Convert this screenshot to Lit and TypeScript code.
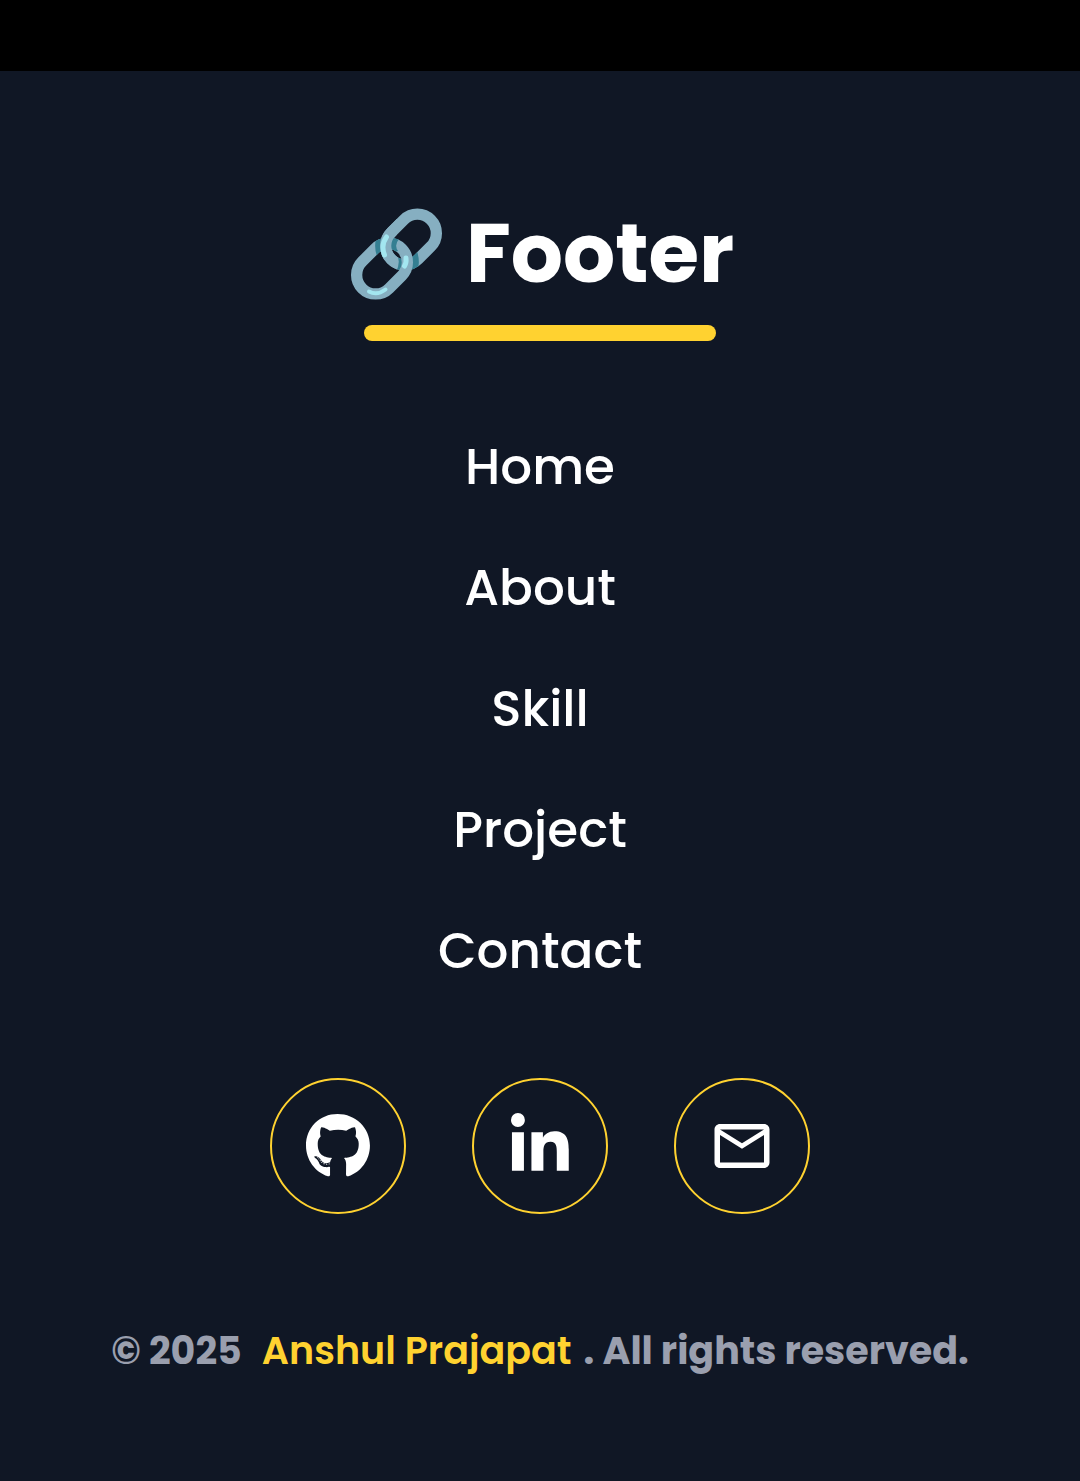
import { LitElement, html, css, svg } from "lit";
import { customElement } from "lit/decorators.js";

const chainIcon = svg`
  <svg class="chain" viewBox="0 0 100 100" role="img" aria-label="Link">
    <defs>
      <mask id="upper-ring" maskUnits="userSpaceOnUse" x="0" y="0" width="100" height="100">
        <rect x="37" y="16.5" width="56" height="38" rx="19" transform="rotate(-45 65 35.5)" fill="none" stroke="#fff" stroke-width="11.3" />
      </mask>
      <mask id="lower-ring" maskUnits="userSpaceOnUse" x="0" y="0" width="100" height="100">
        <rect x="8" y="45.6" width="56" height="38" rx="19" transform="rotate(-45 36 64.6)" fill="none" stroke="#fff" stroke-width="11.3" />
      </mask>
      <clipPath id="shade-right"><rect x="49" y="46" width="28" height="24" /></clipPath>
      <clipPath id="shade-left"><path d="M28 28H56V44L50 48H42V53H28z" /></clipPath>
      <clipPath id="front"><path d="M20 10H51V51Q55 58 50 68V70H20z" /></clipPath>
    </defs>
    <g fill="none" stroke="#86afc1" stroke-width="11.3">
      <rect x="37" y="16.5" width="56" height="38" rx="19" transform="rotate(-45 65 35.5)" />
      <g mask="url(#upper-ring)"><g clip-path="url(#shade-right)">
        <rect x="8" y="45.6" width="56" height="38" rx="19" transform="rotate(-45 36 64.6)" stroke="#347f92" stroke-width="23" />
      </g></g>
      <rect x="8" y="45.6" width="56" height="38" rx="19" transform="rotate(-45 36 64.6)" />
      <g mask="url(#lower-ring)"><g clip-path="url(#shade-left)">
        <rect x="37" y="16.5" width="56" height="38" rx="19" transform="rotate(-45 65 35.5)" stroke="#347f92" stroke-width="21" />
      </g></g>
      <g clip-path="url(#front)">
        <rect x="37" y="16.5" width="56" height="38" rx="19" transform="rotate(-45 65 35.5)" />
      </g>
    </g>
    <g fill="none" stroke="#a3e6f0" stroke-linecap="round">
      <path d="M40.5 33Q34.5 41 38.5 51" stroke-width="5" />
      <path d="M60 54Q60.5 59 58.5 62" stroke-width="5" />
      <path d="M23 87.5Q31 92 39.5 85.5" stroke-width="4" />
    </g>
  </svg>`;

const githubIcon = svg`
  <svg viewBox="0 0 496 512" aria-hidden="true"><path d="M165.9 397.4c0 2-2.3 3.6-5.2 3.6-3.3.3-5.6-1.3-5.6-3.6 0-2 2.3-3.6 5.2-3.6 3-.3 5.6 1.3 5.6 3.6zm-31.1-4.5c-.7 2 1.3 4.3 4.3 4.9 2.6 1 5.6 0 6.2-2s-1.3-4.3-4.3-5.2c-2.6-.7-5.5.3-6.2 2.3zm44.2-1.7c-2.9.7-4.9 2.6-4.6 4.9.3 2 2.9 3.3 5.9 2.6 2.9-.7 4.9-2.6 4.6-4.6-.3-1.9-3-3.2-5.9-2.9zM244.8 8C106.1 8 0 113.3 0 252c0 110.9 69.8 205.8 169.5 239.2 12.8 2.3 17.3-5.6 17.3-12.1 0-6.2-.3-40.4-.3-61.4 0 0-70 15-84.7-29.8 0 0-11.4-29.1-27.8-36.6 0 0-22.9-15.7 1.6-15.4 0 0 24.9 2 38.6 25.8 21.9 38.6 58.6 27.5 72.9 20.9 2.3-16 8.8-27.1 16-33.7-55.9-6.2-112.3-14.3-112.3-110.5 0-27.5 7.6-41.3 23.6-58.9-2.6-6.5-11.1-33.3 2.6-67.9 20.9-6.5 69 27 69 27 20-5.6 41.5-8.5 62.8-8.5s42.8 2.9 62.8 8.5c0 0 48.1-33.6 69-27 13.7 34.7 5.2 61.4 2.6 67.9 16 17.7 25.8 31.5 25.8 58.9 0 96.5-58.9 104.2-114.8 110.5 9.2 7.9 17 22.9 17 46.4 0 33.7-.3 75.4-.3 83.6 0 6.5 4.6 14.4 17.3 12.1C428.2 457.8 496 362.9 496 252 496 113.3 383.5 8 244.8 8zM97.2 352.9c-1.3 1-1 3.3.7 5.2 1.6 1.6 3.9 2.3 5.2 1 1.3-1 1-3.3-.7-5.2-1.6-1.6-3.9-2.3-5.2-1zm-10.8-8.1c-.7 1.3.3 2.9 2.3 3.9 1.6 1 3.6.7 4.3-.7.7-1.3-.3-2.9-2.3-3.9-2-.6-3.6-.3-4.3.7zm32.4 35.6c-1.6 1.3-1 4.3 1.3 6.2 2.3 2.3 5.2 2.6 6.5 1 1.3-1.3.7-4.3-1.3-6.2-2.2-2.3-5.2-2.6-6.5-1zm-11.4-14.7c-1.6 1-1.6 3.6 0 5.9 1.6 2.3 4.3 3.3 5.6 2.3 1.6-1.3 1.6-3.9 0-6.2-1.4-2.3-4-3.3-5.6-2z" /></svg>`;

const linkedinIcon = svg`
  <svg viewBox="0 0 448 512" aria-hidden="true"><path d="M100.28 448H7.4V148.9h92.88zM53.79 108.1C24.09 108.1 0 83.5 0 53.8a53.79 53.79 0 0 1 107.58 0c0 29.7-24.1 54.3-53.79 54.3zM447.9 448h-92.68V302.4c0-34.7-.7-79.2-48.29-79.2-48.29 0-55.69 37.7-55.69 76.7V448h-92.78V148.9h89.08v40.8h1.3c12.4-23.5 42.69-48.3 87.88-48.3 94 0 111.28 61.9 111.28 142.3V448z" /></svg>`;

const mailIcon = svg`
  <svg viewBox="0 0 24 24" aria-hidden="true"><path d="M22 6c0-1.1-.9-2-2-2H4c-1.1 0-2 .9-2 2v12c0 1.1.9 2 2 2h16c1.1 0 2-.9 2-2V6zm-2 0-8 5-8-5h16zm0 12H4V8l8 5 8-5v10z" /></svg>`;

const LINKS = ["Home", "About", "Skill", "Project", "Contact"];

const SOCIALS = [
  { label: "GitHub", icon: githubIcon },
  { label: "LinkedIn", icon: linkedinIcon },
  { label: "Email", icon: mailIcon },
];

@customElement("app-root")
export class AppRoot extends LitElement {
  static styles = css`
    :host {
      display: flex;
      flex-direction: column;
      min-height: 100vh;
      background: #101725;
      color: #fff;
      font-family: Poppins, Inter, "Liberation Sans", sans-serif;
    }
    .strip {
      height: 71px;
      background: #000;
    }
    .footer {
      display: flex;
      flex-direction: column;
      align-items: center;
      padding: 123px 24px 96px;
    }
    .title {
      display: flex;
      align-items: center;
      gap: 20px;
      margin: 0;
      font-size: 82px;
      font-weight: 700;
      line-height: 120px;
    }
    .chain {
      width: 100px;
      height: 100px;
    }
    .underline {
      width: 352px;
      max-width: 100%;
      height: 16px;
      margin-top: 11px;
      border-radius: 8px;
      background: #ffd230;
    }
    .links {
      display: flex;
      flex-direction: column;
      align-items: center;
      gap: 48px;
      margin: 89px 0 0;
      padding: 0;
      list-style: none;
      font-size: 50px;
      font-weight: 500;
      line-height: 73px;
    }
    a {
      color: inherit;
      text-decoration: none;
    }
    .socials {
      display: flex;
      gap: 66px;
      margin-top: 91px;
    }
    .social {
      display: flex;
      align-items: center;
      justify-content: center;
      box-sizing: border-box;
      width: 136px;
      height: 136px;
      border: 2px solid #ffd230;
      border-radius: 50%;
    }
    .social svg {
      height: 66px;
      fill: #fff;
    }
    .copyright {
      margin: 109px 0 0;
      color: #9a9fae;
      font-size: 38px;
      font-weight: 700;
      line-height: 56px;
      text-align: center;
    }
    .name {
      margin: 0 4px 0 12px;
      color: #ffd230;
      font-weight: 600;
    }
  `;

  render() {
    return html`
      <div class="strip"></div>
      <footer class="footer">
        <h2 class="title">${chainIcon}<span>Footer</span></h2>
        <div class="underline"></div>
        <nav aria-label="Footer">
          <ul class="links">
            ${LINKS.map((name) => html`<li><a href="#${name.toLowerCase()}">${name}</a></li>`)}
          </ul>
        </nav>
        <div class="socials">
          ${SOCIALS.map((s) => html`<a class="social" href="#${s.label.toLowerCase()}" aria-label=${s.label}>${s.icon}</a>`)}
        </div>
        <p class="copyright">© 2025 <a class="name" href="#home">Anshul Prajapat</a> . All rights reserved.</p>
      </footer>
    `;
  }
}
